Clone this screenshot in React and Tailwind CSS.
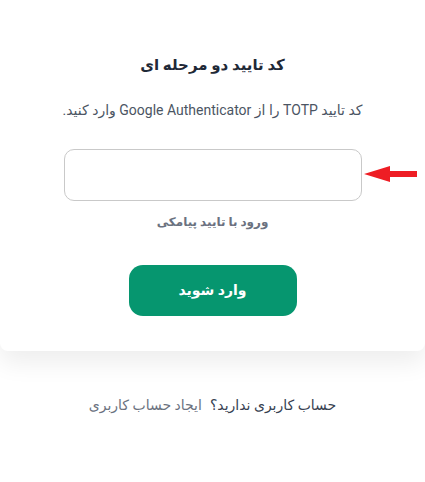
import React from 'react';

const App = () => {
  return (
    <div dir="rtl" className="min-h-screen bg-white font-['Roboto','DejaVu_Sans',sans-serif]">
      {/* Card */}
      <div className="bg-white rounded-b-lg shadow-[0_12px_24px_rgba(0,0,0,0.07)] pt-[53px] pb-[35px] flex flex-col items-center">
        <h1 className="text-[15px] leading-6 font-bold text-[#1f2937]">کد تایید دو مرحله ای</h1>
        <p className="mt-[23px] text-sm leading-5 text-[#4b5563]">
          کد تایید TOTP را از Google Authenticator وارد کنید.
        </p>

        {/* Code input */}
        <div className="relative mt-[29px]">
          <input
            type="text"
            className="w-[298px] h-[52px] rounded-[10px] border border-[#c9c9c9] bg-white px-4 text-center focus:outline-none"
          />
          <svg
            className="absolute top-[16px] right-[-55px]"
            width="53"
            height="18"
            viewBox="0 0 53 18"
          >
            <path d="M0 9 L26 1 L26 6 L53 6 L53 12 L26 12 L26 17 Z" fill="#ee1d24" />
          </svg>
        </div>

        <button className="mt-[11px] text-[12px] leading-5 font-bold text-[#6b7280]">
          ورود با تایید پیامکی
        </button>

        <button className="mt-[33px] w-[168px] h-[51px] rounded-[14px] bg-[#06966f] text-white text-[14px] font-bold">
          وارد شوید
        </button>
      </div>

      {/* Footer */}
      <div className="mt-[44px] flex justify-center gap-2 text-sm leading-5">
        <span className="text-[#374151]">حساب کاربری ندارید؟</span>
        <a className="text-[#6b7280]">ایجاد حساب کاربری</a>
      </div>
    </div>
  );
};

export default App;
